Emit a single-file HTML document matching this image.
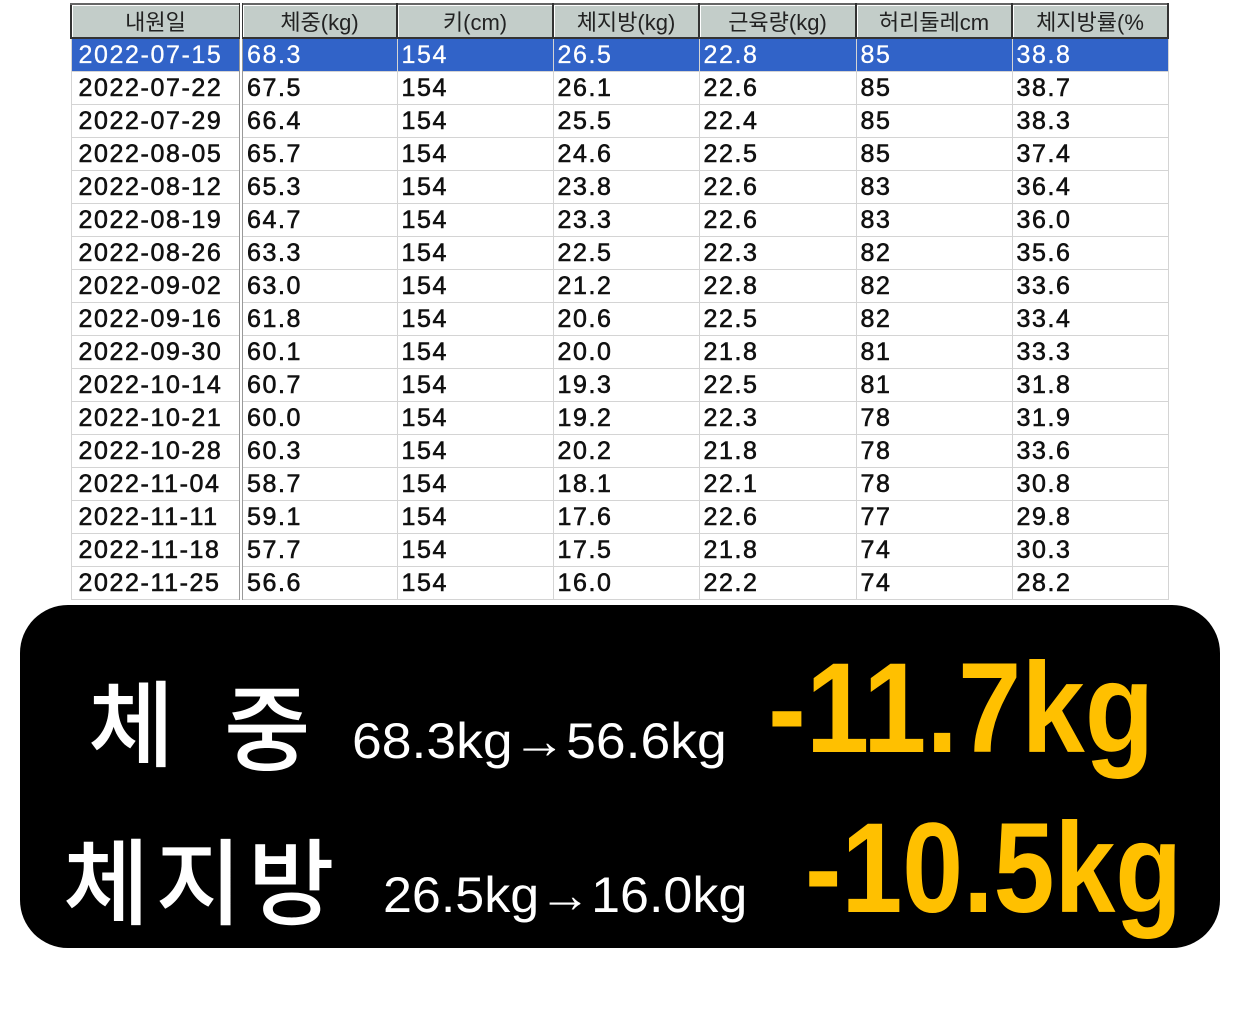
<!DOCTYPE html>
<html><head><meta charset="utf-8">
<style>
html,body{margin:0;padding:0;background:#fff;width:1255px;height:1010px;overflow:hidden;position:relative}
table{position:absolute;left:70px;top:3px;border-collapse:collapse;table-layout:fixed;font-family:"Liberation Sans","Noto Sans CJK KR",sans-serif}
th{height:32px;background:#c3cdc9;border:2px solid #333;border-top:2px solid #666;font-weight:normal;font-size:22px;color:#222;padding:0;text-align:center;white-space:nowrap;overflow:hidden;box-shadow:inset 1px 1px 0 #fff}
td{height:32px;border:1px solid #d4d4d4;font-size:25px;color:#111;padding:0 0 0 4px;white-space:nowrap;overflow:hidden;line-height:32px;font-weight:normal;letter-spacing:1.6px;-webkit-text-stroke:0.6px #111}
tr.sel td{background:#3163c8;color:#fff;-webkit-text-stroke:0.3px #fff}
td.d{border-right:4px double #999;padding-left:7px}
.box{position:absolute;left:20px;top:605px;width:1200px;height:343px;background:#000;border-radius:48px}
.t{position:absolute;white-space:nowrap;line-height:1}
.k{font-family:"Noto Sans CJK KR",sans-serif;font-weight:500;color:#fff;font-size:94px}
.s{font-family:"Liberation Sans",sans-serif;color:#fff;font-size:50px;transform-origin:0 0}
.y{font-family:"Liberation Sans",sans-serif;font-weight:bold;color:#ffc000;font-size:128px;transform-origin:0 0}
</style></head><body>
<table>
<colgroup><col style="width:170px"><col style="width:156px"><col style="width:156px"><col style="width:146px"><col style="width:157px"><col style="width:156px"><col style="width:156px"></colgroup>
<tr><th style="border-right:4px double #333">내원일</th><th>체중(kg)</th><th>키(cm)</th><th>체지방(kg)</th><th>근육량(kg)</th><th>허리둘레cm</th><th>체지방률(%</th></tr>
<tr class="sel"><td class="d">2022-07-15</td><td>68.3</td><td>154</td><td>26.5</td><td>22.8</td><td>85</td><td>38.8</td></tr>
<tr><td class="d">2022-07-22</td><td>67.5</td><td>154</td><td>26.1</td><td>22.6</td><td>85</td><td>38.7</td></tr>
<tr><td class="d">2022-07-29</td><td>66.4</td><td>154</td><td>25.5</td><td>22.4</td><td>85</td><td>38.3</td></tr>
<tr><td class="d">2022-08-05</td><td>65.7</td><td>154</td><td>24.6</td><td>22.5</td><td>85</td><td>37.4</td></tr>
<tr><td class="d">2022-08-12</td><td>65.3</td><td>154</td><td>23.8</td><td>22.6</td><td>83</td><td>36.4</td></tr>
<tr><td class="d">2022-08-19</td><td>64.7</td><td>154</td><td>23.3</td><td>22.6</td><td>83</td><td>36.0</td></tr>
<tr><td class="d">2022-08-26</td><td>63.3</td><td>154</td><td>22.5</td><td>22.3</td><td>82</td><td>35.6</td></tr>
<tr><td class="d">2022-09-02</td><td>63.0</td><td>154</td><td>21.2</td><td>22.8</td><td>82</td><td>33.6</td></tr>
<tr><td class="d">2022-09-16</td><td>61.8</td><td>154</td><td>20.6</td><td>22.5</td><td>82</td><td>33.4</td></tr>
<tr><td class="d">2022-09-30</td><td>60.1</td><td>154</td><td>20.0</td><td>21.8</td><td>81</td><td>33.3</td></tr>
<tr><td class="d">2022-10-14</td><td>60.7</td><td>154</td><td>19.3</td><td>22.5</td><td>81</td><td>31.8</td></tr>
<tr><td class="d">2022-10-21</td><td>60.0</td><td>154</td><td>19.2</td><td>22.3</td><td>78</td><td>31.9</td></tr>
<tr><td class="d">2022-10-28</td><td>60.3</td><td>154</td><td>20.2</td><td>21.8</td><td>78</td><td>33.6</td></tr>
<tr><td class="d">2022-11-04</td><td>58.7</td><td>154</td><td>18.1</td><td>22.1</td><td>78</td><td>30.8</td></tr>
<tr><td class="d">2022-11-11</td><td>59.1</td><td>154</td><td>17.6</td><td>22.6</td><td>77</td><td>29.8</td></tr>
<tr><td class="d">2022-11-18</td><td>57.7</td><td>154</td><td>17.5</td><td>21.8</td><td>74</td><td>30.3</td></tr>
<tr><td class="d">2022-11-25</td><td>56.6</td><td>154</td><td>16.0</td><td>22.2</td><td>74</td><td>28.2</td></tr>
</table>
<div class="box"></div>
<div class="t k" style="left:88px;top:672px">체</div>
<div class="t k" style="left:224px;top:676px">중</div>
<div class="t s" style="left:352px;top:716px;transform:scaleX(1.07)">68.3kg→56.6kg</div>
<div class="t y" style="left:768px;top:645px;transform:scaleX(0.89)">-11.7kg</div>
<div class="t k" style="left:63px;top:830px;letter-spacing:6px">체지방</div>
<div class="t s" style="left:383px;top:870px;transform:scaleX(1.04)">26.5kg→16.0kg</div>
<div class="t y" style="left:805px;top:805px;transform:scaleX(0.855)">-10.5kg</div>
</body></html>
